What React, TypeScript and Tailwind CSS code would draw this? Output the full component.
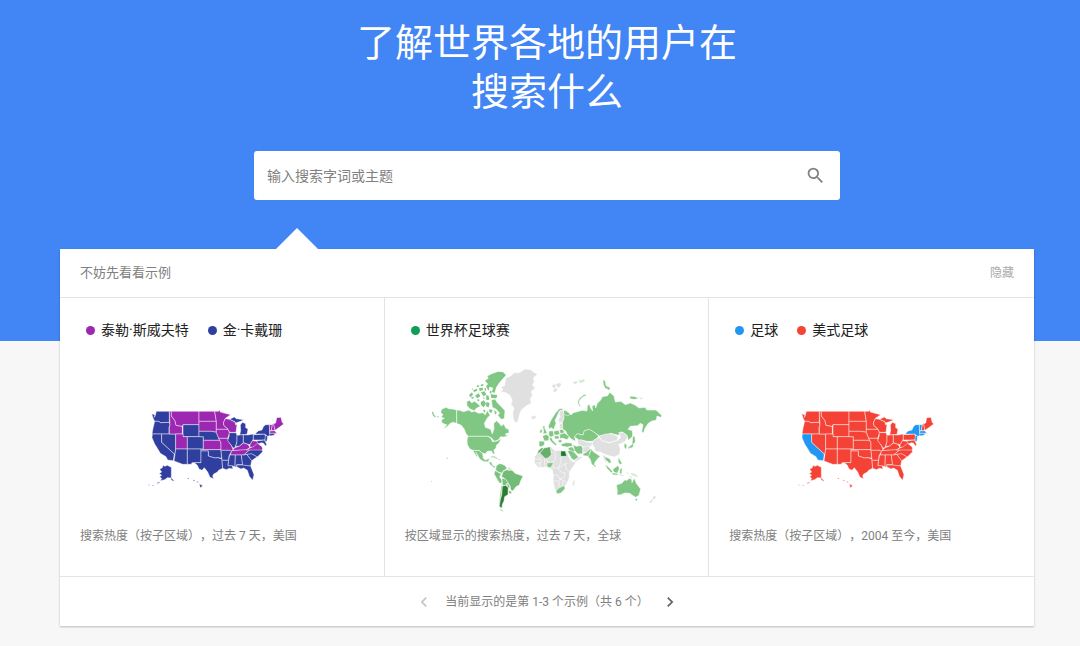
import React from "react";
import { MdChevronLeft, MdChevronRight, MdSearch } from "react-icons/md";

const STATES: Record<string, string> = {
  WA: "M36 41L46 45L44 52L47 46L50 34H89V67L63 68L56 64L45 64L41 56Z",
  OR: "M45 64L56 64L63 68L89 67L91 75L88 82V102H37L40 85Z",
  CA: "M38 102H66V127L104 162L101 182L84 180L79 170L62 160L54 146L45 132L37 113Z",
  NV: "M66 102H108V147L106 162L104 162L66 127Z",
  ID: "M89 34H95V48L106 62L109 76L128 79V102H89V82L91 75Z",
  MT: "M95 34H178V74H130L128 79L109 76L106 62L95 48Z",
  WY: "M130 74H178V110H130Z",
  UT: "M108 102H130V110H143V147H108Z",
  CO: "M143 110H191V147H143Z",
  AZ: "M108 147H143V193H129L103 183L106 162Z",
  NM: "M143 147H184V188H157L155 193H143Z",
  ND: "M178 34H225L230 64H178Z",
  SD: "M178 64H230V97L215 94H178Z",
  NE: "M178 94H215L230 97L240 121H191V110H178Z",
  KS: "M191 121H240L244 128V149H191Z",
  OK: "M184 147L191 149H244L246 175L235 173L225 174L206 168V153H184Z",
  TX: "M184 153H206V168L225 174L235 173L247 177L249 205L238 210L232 217L222 222L219 228L222 236L211 232L204 216L194 203L187 211L178 207L173 196L164 188H184Z",
  MN: "M225 34H237L239 29L242 36L256 40L273 44L257 55L251 69L253 77L263 85V88H230V64Z",
  IA: "M230 88H265L270 98L264 115H237L230 97Z",
  MO: "M237 115H264L267 125L275 136L280 148L275 155L271 151H244V128Z",
  AR: "M244 151L271 151L275 155L268 168L267 181H247Z",
  LA: "M247 181H267L265 196H277L280 207L269 205L260 209L249 205Z",
  WI: "M257 56L270 58L286 66L288 75L292 72L289 97H270L263 85L253 77L251 69Z",
  IL: "M268 98H289L292 106V125L286 143L280 144L275 136L264 122L269 106Z",
  MIU: "M270 58L284 51L290 56L312 59L303 64L288 69L286 65Z",
  MI: "M302 75L308 67L318 71L318 83L325 87L322 103L300 105L303 92Z",
  IN: "M292 106L311 104V128L300 138L288 140L292 125Z",
  OH: "M311 104L324 105L341 102V118L331 134L322 132L311 128Z",
  KY: "M277 152L286 143L300 138L311 129L322 132L328 137L331 142L320 150Z",
  TN: "M272 165L276 152L332 148L312 165Z",
  MS: "M270 165H287L286 200L277 197H265L267 181Z",
  AL: "M287 165H305L309 194H291L292 201L286 200Z",
  GA: "M305 165L321 163L336 181L333 198L309 197Z",
  FL: "M291 195H309L333 198L343 224L339 241L329 229L323 211L312 204L304 207L292 201Z",
  SC: "M321 163L334 160L353 170L336 182Z",
  NC: "M312 165L332 148H366L369 155L353 171L336 161L321 163Z",
  VA: "M320 150L340 139L352 125L357 133L367 140L369 148L366 150Z",
  WV: "M331 134L341 118V123H350L357 127L340 141L331 142Z",
  PA: "M341 104L375 102L378 110L376 120H341Z",
  MD: "M350 123L375 120L381 134L377 138L372 130L366 128L357 131Z",
  NJ: "M377 106L384 108L382 122L377 126L376 120Z",
  NY: "M346 102L355 93L367 90L371 80L378 74H389L390 102L396 105L384 109L375 102H346Z",
  VT: "M389 74H398L395 92H390Z",
  NH: "M398 74L402 69L406 90L395 93Z",
  MA: "M390 93L405 92L412 101L404 100H390Z",
  CT: "M390 100H404L405 105L391 108Z",
  ME: "M402 72L408 69L411 53L424 52L427 66L432 72L419 82L406 91Z",
  AK: "M95 202V234L83 233L75 239L62 242L66 235L60 231L66 225L58 221L66 216L60 208L68 203L70 196L76 199L83 196Z",
  AK2: "M95 233L103 242L100 244L93 237Z",
  HI: "M179 251L189 257L182 264Z",
};

const SWIFT = "ID MT ND SD MN WI IA MO KS UT KY TN VA WV NH VT MA ME".split(" ");
const SOCCER = "CA NY VT MA CT NJ".split(" ");

type UsMapProps = { base: string; accent: string; states: string[]; label: string };

function UsMap({ base, accent, states, label }: UsMapProps) {
  return (
    <svg viewBox="-2 -120 495 465" className="h-[155px] w-[165px]" role="img" aria-label={label}>
      <g stroke="#fff" strokeOpacity=".75" strokeWidth="1.8" strokeLinejoin="round">
        {Object.entries(STATES).map(([id, d]) => (
          <path key={id} d={d} fill={states.includes(id) ? accent : base} />
        ))}
      </g>
      <path
        d="M25 254h5v2h-5zM38 256h4v2h-4zM52 248l8-3v3l-7 3zM144 234h4v3h-4zM160 239l5 1v3h-4zM172 244l5 2-2 2-4-2z"
        fill={base}
        opacity=".55"
      />
    </svg>
  );
}

function WorldMap() {
  return (
    <svg viewBox="0 0 735 465" className="h-[155px] w-[245px]" role="img" aria-label="世界杯足球赛">
      <g stroke="#fff" strokeWidth="1.6" strokeLinejoin="round">
        {/* North America */}
        <g fill="#81c784">
          <path d="M53 148L66 142L74 146L86 147L98 150V190L88 187L79 190L69 200L58 207L68 194L60 192L52 186L54 178L61 175L51 171L57 164L50 157Z" />
          <path d="M98 150L108 151L118 155L135 150L143 156L152 154L164 160L176 158L184 164L190 151L198 166L190 174L181 190L184 202L200 208L205 222L210 206L209 191L217 182L226 190L232 198L239 192L247 207L257 217L243 223L252 228L239 231L230 230L223 240L211 244L202 233L191 229H133L126 221L121 208L112 196L98 190Z" />
          <path d="M132 229H190L199 233L206 245L219 243L232 236L225 249L218 255L216 264L209 271L213 281L207 282L202 273L190 274L184 281L174 279L166 272L146 271L137 266L130 254L129 240Z" />
          <path d="M146 271L166 272L176 281L178 295L184 300L197 295L193 305L180 305L167 297L160 284L155 277L163 292L157 289Z" />
          <path d="M194 305L203 307L206 316L215 320L212 324L199 315Z" />
          <path d="M128 125L136 121L143 128L152 124L162 132L169 139L157 145L151 152L138 147L129 137Z" />
          <path d="M202 120L213 117L220 128L233 141L243 152L241 176L231 178L221 165L227 160L217 148L205 142Z" />
        </g>
        <g fill="#81c784" stroke="none">
          <path d="M183 62L194 55L190 49L203 42L222 35L236 36L246 45L236 56L225 69L216 83L212 98L204 96L207 83L196 80L194 93L186 79L192 72Z" />
          <path d="M135 105l9-8 3 7-8 8zM147 91l11-5 2 6-10 4zM153 107l11-7 5 9-9 6zM165 84l13-1-2 8-9 2zM171 97l11-3 5 10-9 5zM170 126l10-5 6 10-7 11-8-7zM186 106l8 1 2 12-9 1zM200 103l20 2-3 10-15-1zM187 126l10 3-3 13-8-3zM197 147l9 4-4 8-7-4zM177 149l8 2-4 8zM211 150l8 8-6 6z" />
          <path d="M140 113l6-3 5 3-6 3zM158 77l6-2 1 5-6 2zM170 74l8-2v5l-7 2zM182 84l4 1v8l-4-2zM161 118l6 1-2 5-5-2zM198 92l5 2-1 7-5-2zM176 112l6 1-2 5zM142 88l4-3 1 4zM227 208l5 6-6 3z" />
          <path d="M24 155l4 1 2 9 6 4-4 3-6-7zM39 168l6 2-3 3zM246 203l9 8-4 4zM68 293h3v3h-3zM21 363h2v2h-2z" />
          <path d="M199 290l11-3 12 9-4 2-9-6-8 1zM221 296l9 2-4 3zM183 278l2-3 5 1z" opacity=".55" />
        </g>
        {/* Greenland and Iceland */}
        <path
          fill="#e0e0e0"
          d="M227 94L237 89L231 81L242 76L245 55L260 48L270 38L286 38L303 27L321 29L329 37L341 42L328 54L331 65L325 75L334 84L321 95L326 105L319 117L322 130L306 138L293 149L287 161L282 184L275 189L268 178L266 157L270 145L261 133L265 120L257 105L245 98Z"
        />
        <path fill="#e0e0e0" d="M320 170L333 166L337 173L326 179Z" />
        {/* South America */}
        <g fill="#7bc27f">
          <path d="M217 317L226 311L234 312L245 318L249 327L238 332L235 340L222 336L215 329Z" />
          <path d="M214 331L224 338L232 340L227 351L234 360L232 372L224 366L215 350L210 341Z" />
          <path d="M249 329L264 330L273 340L286 344L297 348L290 363L286 375L276 380L267 393L260 390L258 378L250 367L241 355L232 350L238 334Z" fill="#73bc77" />
          <path d="M234 354L244 357L252 367L247 376L235 376Z" />
          <path d="M248 371L255 373L258 384L251 383Z" />
          <path d="M254 392L262 393L263 402L254 400Z" />
          <path d="M232 373L235 382L231 406L229 430L232 444L225 440L227 411Z" />
        </g>
        <path d="M249 320L262 324L263 330L253 331Z" fill="#e0e0e0" />
        <path d="M235 378L245 376L253 383L252 404L242 410L240 423L235 433L234 445L226 439L229 419L233 404Z" fill="#2e7d32" />
      </g>
      <path d="M226 444l10 7 3 4-9-3z" fill="#81c784" opacity=".55" />

      {/* Europe, Africa, Asia and Oceania */}
      <g transform="translate(345 0)" stroke="#fff" strokeWidth="1.6" strokeLinejoin="round">
        <path
          fill="#e0e0e0"
          d="M-13 290L-5 278L4 271L36 261L48 272L66 271L84 274L88 289L98 304L111 307L98 326L91 337L91 353L84 370L76 379L66 397L52 402L46 381L42 363L43 346L40 329L29 321L11 322L-3 322L-14 308Z"
        />
        <path
          fill="none"
          d="M20 295L27 307L42 306L43 324L58 324L72 316L85 309M48 274L49 299L42 306M66 289V306L58 324M17 295V321M-1 289L8 303L-2 318M43 345L57 346L61 357L73 361L85 369M42 363H61L60 381M58 324L65 336L78 338L76 351L61 357M73 361L71 378M79 310L82 328L92 336M-13 297L4 299M-10 309L4 308L5 321"
        />
        <g fill="#81c784">
          <path d="M70 159L79 151L89 158L96 165L103 158L115 155L130 151L144 153L145 138L151 132L155 145L161 153L159 138L168 134L170 144L175 130L185 120L190 110L206 107L212 97L225 108L229 126L246 124L259 134L274 129L288 135L300 144L318 142L324 150L351 150L369 167L365 172L354 168L352 180L337 184L328 190L318 205L314 218L308 216L312 194L304 190L296 197L274 199L267 208L280 212L281 229L268 241L263 225L246 215L239 226L215 220L203 226L182 228L165 217L151 209L136 213L133 225L114 222L107 231L110 244L97 237L86 226L80 213L70 207L67 195L73 178Z" />
          <path d="M106 230L115 221L132 225L136 212L151 208L166 217L179 228L172 237L161 244L144 244L130 241L122 247L116 237Z" />
          <path d="M28 198L35 182L48 161L60 147L69 145L72 151L61 153L53 171L48 181L51 190L44 209L37 203L30 207Z" />
          <path d="M72 150L83 154L93 161L87 168L75 163Z" />
          <path d="M11 199L17 197L18 207L25 219L12 222L14 213Z" />
          <path d="M3 210L10 208L9 218L2 219Z" />
          <path d="M10 228L23 223L31 231L28 242L16 243Z" />
          <path d="M0 243L17 244L16 255L5 261L0 256Z" />
          <path d="M30 213L42 212L45 227L34 232L29 224Z" />
          <path d="M45 213L59 211L63 223L51 226L44 222Z" />
          <path d="M30 235L39 233L41 241L53 253L50 257L36 245Z" />
          <path d="M45 228L59 227L61 236L48 237Z" />
          <path d="M62 223L77 219L91 230L84 239L70 234L63 237Z" />
          <path d="M61 210L70 207L77 217L65 222Z" />
          <path d="M58 240L69 239L67 248L58 247Z" />
          <path d="M66 252L81 248L98 249L101 258L84 261L69 259Z" />
          <path d="M102 254L112 259L127 256L132 265L131 281L117 282L106 271Z" />
          <path d="M87 264L99 260L107 271L103 278L91 273Z" />
          <path d="M85 273L94 271L106 277L119 292L105 301L97 295Z" />
          <path d="M131 281L138 279L148 265L158 268L152 277L152 289L144 288L134 287Z" />
          <path d="M157 268L164 276L178 285L184 289L176 296L168 307L165 318L158 313L153 296L147 291L153 278Z" />
          <path d="M232 375L248 370L257 360L265 361L270 355L278 358L279 368L286 354L292 370L305 387L300 406L290 412L280 406L272 400L257 399L246 404L234 405L235 391Z" />
          <path d="M24 309L43 307L41 315L33 324L24 320Z" />
          <path d="M51 393L58 385L68 380L76 376L78 386L66 399L54 402Z" />
        </g>
        <g fill="#e0e0e0">
          <path d="M60 159L66 150L73 152L75 174L70 187L61 188L58 178L64 170Z" />
          <path d="M62 190L71 190L71 207L62 207Z" />
          <path d="M180 229L196 223L217 221L237 229L235 241L210 248L189 242Z" />
          <path d="M158 252L164 240L180 232L190 243L210 249L236 241L245 232L239 218L253 217L266 229L260 242L248 250L239 253L244 267L242 283L227 291L214 288L200 284L185 277L168 273L166 262Z" />
          <path d="M114 241L126 239L143 246L161 248L156 260L139 265L131 260L119 254Z" />
          <path d="M131 262L151 257L153 267L142 277L132 278Z" />
          <path d="M106 302L121 290L132 290L120 300L108 307Z" />
          <path d="M190 284L198 287L206 297L201 308L194 298Z" />
          <path d="M102 363L109 359L105 377L99 378Z" />
        </g>
        <path d="M5 276L14 264L34 260L37 284L28 293L19 296L3 280Z" fill="#66b06b" />
        <path d="M65 273L79 273L83 289H65Z" fill="#1b7a2e" />
        <path d="M-1 271L8 263L14 265L5 277L-6 282Z" fill="#66b06b" />
      </g>
      <g transform="translate(345 0)">
        <path
          d="M141 105L128 112L120 122L119 133L124 140L117 127L123 114L135 105ZM193 61l5 3 1 12 6 5-4 5-6-10zM205 80l7 3-1 6-6-2zM274 110l14 1 8 4-11 2-11-2zM282 232l4-3 2 17-7 6zM279 254l3-2-1 9-14 4 7-7zM257 251l5 4-1 11-4-4zM166 316l3 1-1 4zM200 292l12 6 4 9-6 1-8-9zM201 316l7 6 12 14-4 1-11-12zM223 328l14-10 3 8-6 12-9-3zM221 340l14 2v2l-14-1zM239 295l4 7 5 8-4 3-5-8zM244 328l4-2-1 14-4-1zM289 418l6-1-3 5z"
          fill="#81c784"
          stroke="#81c784"
        />
        <path
          d="M103 67l10-4 3 5-11 5zM117 62l18-4 3 5-12 7zM308 119l-10-8 13 3z"
          fill="#81c784"
          opacity=".35"
        />
        <path
          d="M38 77l9-5 4 8-6 4zM50 72l14-3 2 6-8 9zM43 89l8-5 5 6-11 8zM275 338l15 5 9 9-11-3-10-4zM343 408l8 2-4 8-5-2zM341 417l-10 10 3 3 9-10z"
          fill="#e0e0e0"
        />
        <path d="M241 345l12 1M263 337l6 4M271 350l8 2" stroke="#b8dfba" strokeWidth="2" />
      </g>
    </svg>
  );
}

function Example({ terms, caption, children }: { terms: [string, string][]; caption: string; children: React.ReactNode }) {
  return (
    <article className="flex flex-col px-5 pt-5 pb-7">
      <ul className="flex gap-[19px] pl-[6px] text-sm leading-6 text-[#212121]">
        {terms.map(([name, dot]) => (
          <li key={name} className="flex items-center gap-[6px]">
            <span className={`size-[9px] rounded-full ${dot}`} />
            {name}
          </li>
        ))}
      </ul>
      <div className="mt-[18px] flex justify-center">{children}</div>
      <p className="mt-[9px] text-xs leading-6 text-[#808080]">{caption}</p>
    </article>
  );
}

export default function App() {
  return (
    <main
      className="min-h-screen bg-[#f7f7f7] font-['Roboto','Noto_Sans_CJK_SC',sans-serif] [text-spacing-trim:space-all]"
      lang="zh-CN"
    >
      <section className="bg-[#4285f4] pt-[19px] pr-[46px] pb-[141px] pl-[60px]">
        <h1 className="text-center text-[38px] leading-[49px] font-normal text-white">
          了解世界各地的用户在
          <br />
          搜索什么
        </h1>
        <form className="mx-auto mt-[34px] flex h-[49px] max-w-[586px] items-center rounded-[3px] bg-white pr-[14px] pl-[13px]">
          <label htmlFor="term" className="sr-only whitespace-nowrap">
            搜索
          </label>
          <input
            id="term"
            type="text"
            placeholder="输入搜索字词或主题"
            className="h-full min-w-0 flex-1 text-sm outline-none placeholder:text-[#808080]"
          />
          <button type="button" aria-label="搜索" className="text-[#808080]">
            <MdSearch size={21} />
          </button>
        </form>
      </section>

      {/* Examples card, overlaps the hero */}
      <div className="-mt-[92px] pr-[46px] pb-5 pl-[60px]">
        <section className="relative bg-white shadow-[0_1px_2px_rgba(0,0,0,0.25)]">
          <span className="absolute -top-[21px] left-[216px] border-x-[21px] border-b-[21px] border-transparent border-b-white" />
          <header className="flex h-[49px] items-center justify-between border-b border-[#e4e4e4] px-5">
            <h2 className="text-[13px] text-[#808080]">不妨先看看示例</h2>
            <button type="button" className="text-xs text-[#aaaaaa]">
              隐藏
            </button>
          </header>

          <div className="grid grid-cols-3 divide-x divide-[#e4e4e4] border-b border-[#e4e4e4]">
            <Example
              terms={[
                ["泰勒·斯威夫特", "bg-[#9c27b0]"],
                ["金·卡戴珊", "bg-[#303f9f]"],
              ]}
              caption="搜索热度（按子区域），过去 7 天，美国"
            >
              <UsMap base="#303f9f" accent="#9c27b0" states={SWIFT} label="泰勒·斯威夫特，金·卡戴珊" />
            </Example>
            <Example terms={[["世界杯足球赛", "bg-[#0f9d58]"]]} caption="按区域显示的搜索热度，过去 7 天，全球">
              <WorldMap />
            </Example>
            <Example
              terms={[
                ["足球", "bg-[#2196f3]"],
                ["美式足球", "bg-[#f44336]"],
              ]}
              caption="搜索热度（按子区域），2004 至今，美国"
            >
              <UsMap base="#f44336" accent="#2196f3" states={SOCCER} label="足球，美式足球" />
            </Example>
          </div>

          <footer className="flex h-[49px] items-center justify-center gap-[11px] text-xs text-[#808080]">
            <button type="button" disabled aria-label="上一页" className="text-[#c4c4c4]">
              <MdChevronLeft size={20} />
            </button>
            <span>当前显示的是第 1-3 个示例（共 6 个）</span>
            <button type="button" aria-label="下一页" className="text-[#616161]">
              <MdChevronRight size={20} />
            </button>
          </footer>
        </section>
      </div>
    </main>
  );
}
